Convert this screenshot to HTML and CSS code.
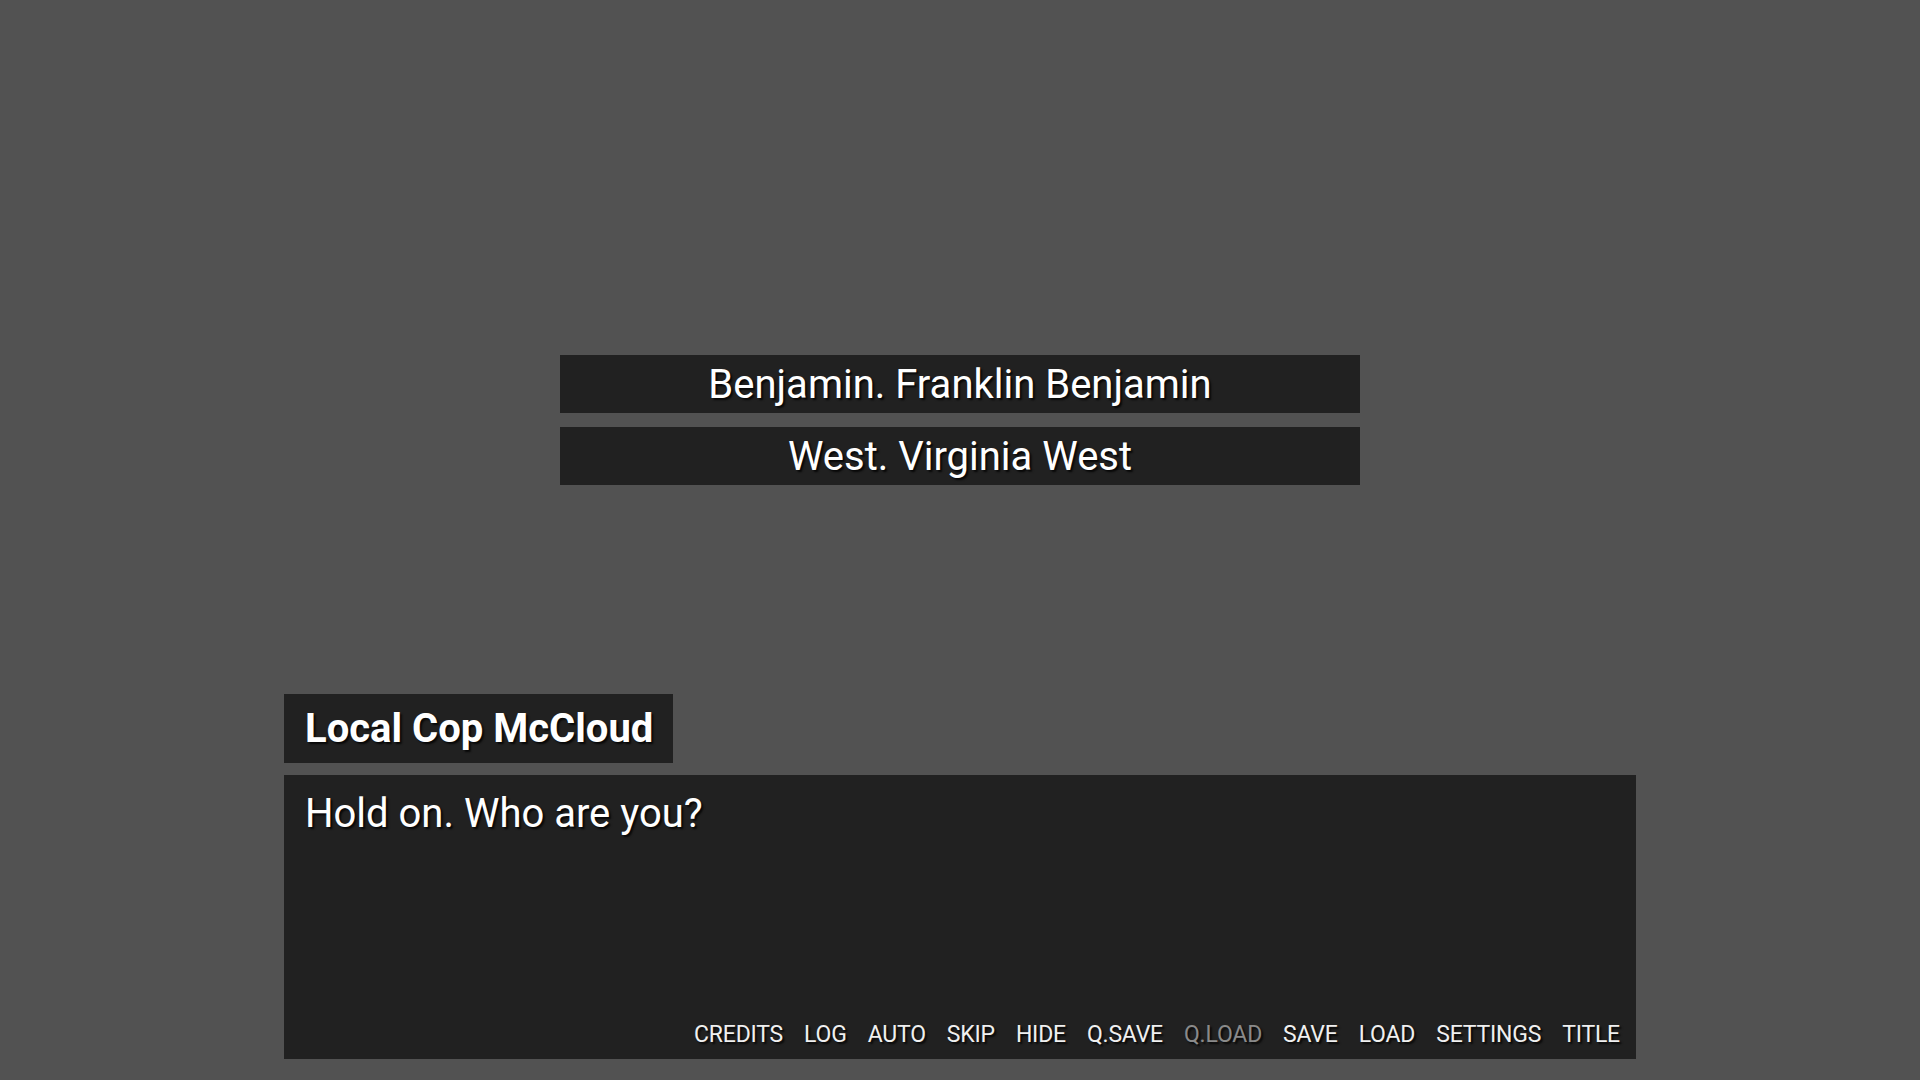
FILE: index.html
```html
<!DOCTYPE html>
<html lang="en">
<head>
<meta charset="utf-8">
<title>Scene</title>
<link rel="stylesheet" href="styles.css">
</head>
<body>
<div class="screen">
  <div class="choices">
    <button class="choice">Benjamin. Franklin Benjamin</button>
    <button class="choice">West. Virginia West</button>
  </div>
  <div class="say">
    <div class="namebox">Local Cop McCloud</div>
    <div class="textbox">
      <p class="dialogue">Hold on. Who are you?</p>
      <nav class="quickmenu">
        <span class="qm">CREDITS</span>
        <span class="qm">LOG</span>
        <span class="qm">AUTO</span>
        <span class="qm">SKIP</span>
        <span class="qm">HIDE</span>
        <span class="qm">Q.SAVE</span>
        <span class="qm qm-disabled">Q.LOAD</span>
        <span class="qm">SAVE</span>
        <span class="qm">LOAD</span>
        <span class="qm">SETTINGS</span>
        <span class="qm">TITLE</span>
      </nav>
    </div>
  </div>
</div>
</body>
</html>
```
FILE: styles.css
```css
html, body {
  margin: 0;
  padding: 0;
  background: #525252;
}

.screen {
  width: 1920px;
  height: 1080px;
  box-sizing: border-box;
  padding-top: 355px;
  padding-bottom: 21px;
  display: flex;
  flex-direction: column;
  align-items: center;
  font-family: Roboto, "Liberation Sans", sans-serif;
  color: #ffffff;
}

.choices {
  width: 800px;
  display: flex;
  flex-direction: column;
  gap: 14px;
}

.choice {
  height: 58px;
  margin: 0;
  padding: 0;
  border: none;
  background: #212121;
  color: #ffffff;
  font-family: Roboto, "Liberation Sans", sans-serif;
  font-size: 40px;
  text-shadow: 2px 2px 2px rgba(0, 0, 0, 0.8);
  display: flex;
  align-items: center;
  justify-content: center;
}

.say {
  margin-top: auto;
  width: 1352px;
  display: flex;
  flex-direction: column;
  align-items: flex-start;
  gap: 12px;
}

.namebox {
  background: #212121;
  height: 69px;
  box-sizing: border-box;
  padding: 0 20px 0 21px;
  display: flex;
  align-items: center;
  font-size: 40px;
  font-weight: 700;
  text-shadow: 2px 2px 2px rgba(0, 0, 0, 0.8);
}

.textbox {
  align-self: stretch;
  height: 284px;
  box-sizing: border-box;
  background: #212121;
  padding: 15px 16px 10px 21px;
  display: flex;
  flex-direction: column;
}

.dialogue {
  margin: 0;
  font-size: 40px;
  line-height: 1.2;
  text-shadow: 2px 2px 2px rgba(0, 0, 0, 0.8);
}

.quickmenu {
  margin-top: auto;
  display: flex;
  justify-content: flex-end;
  gap: 21px;
  font-size: 23px;
  line-height: 28px;
  letter-spacing: -0.2px;
  color: #f0f0f0;
  text-shadow: 2px 2px 2px rgba(0, 0, 0, 0.8);
}

.qm-disabled {
  color: #8a8a8a;
}
```
